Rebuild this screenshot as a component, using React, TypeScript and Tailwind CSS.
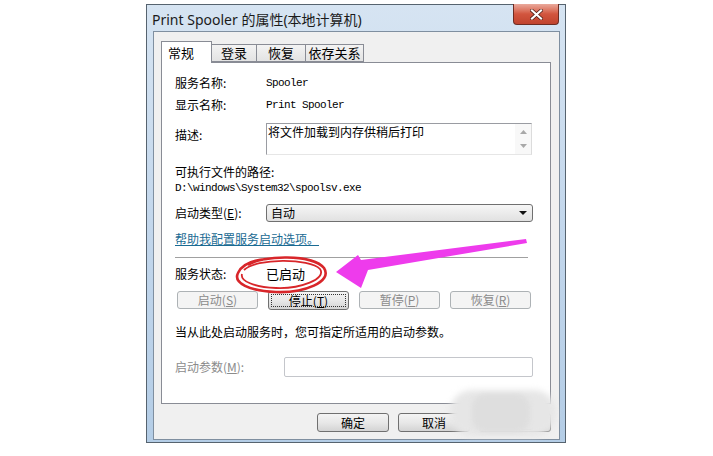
const cjk = { fontFamily: '"Noto Sans CJK SC", "Noto Sans", sans-serif' };
const mono = { fontFamily: '"Liberation Mono", "Noto Sans CJK SC", monospace' };

function Tab({ label, active, w }: { label: string; active?: boolean; w: string }) {
  if (active) {
    return (
      <div className={`${w} relative z-10 -mb-px flex h-[22px] items-start border border-b-0 border-[#898c95] bg-white pl-[6px] pt-[3px] text-[13px] leading-[16px]`}>
        {label}
      </div>
    );
  }
  return (
    <div className={`${w} flex h-[18px] items-center justify-center border border-[#898c95] border-l-0 bg-gradient-to-b from-[#f3f3f3] to-[#e3e3e3] text-[13px] leading-[16px]`}>
      {label}
    </div>
  );
}

function Btn({ children, disabled, focus, w = "w-[81px]" }: { children: React.ReactNode; disabled?: boolean; focus?: boolean; w?: string }) {
  if (disabled) {
    return (
      <div className={`${w} flex h-[18px] items-center justify-center rounded-[3px] border border-[#adb2b5] bg-[#f4f4f4] text-[12px] leading-[14px] text-[#8b8b8b]`}>
        {children}
      </div>
    );
  }
  return (
    <div className={`${w} flex h-[19px] items-center justify-center rounded-[3px] border border-[#707070] bg-gradient-to-b from-[#f4f4f4] via-[#e8e8e8] to-[#d4d4d4] p-[2px] text-[12px] leading-[14px] text-black`}>
      <div className={`flex h-full w-full items-center justify-center ${focus ? "border border-dotted border-[#333]" : ""}`}>{children}</div>
    </div>
  );
}

export default function App() {
  return (
    <div className="relative h-[456px] w-[713px] overflow-hidden bg-white text-black" style={cjk}>
      <div className="ml-[146px] mt-[4px] flex h-[439px] w-[420px] flex-col border border-[#56636f] bg-gradient-to-b from-[#d6e4f2] via-[#c3d7ec] to-[#b4cde6]">
        {/* title bar */}
        <div className="flex h-[26px] items-start">
          <div className="pl-[5px] pt-[7px] text-[14px] leading-[16px] text-[#1b1b1b]" style={{ fontFamily: '"Noto Sans", "Noto Sans CJK SC", sans-serif' }}>
            Print Spooler 的属性(本地计算机)
          </div>
          <div className="-mt-px ml-auto mr-[6px] flex h-[21px] w-[46px] items-center justify-center rounded-b-[4px] border border-t-0 border-[#6e2c22] bg-gradient-to-b from-[#e9a99c] via-[#d2553e] to-[#c0432e]">
            <svg width="13" height="11" viewBox="0 0 13 11">
              <path d="M2 1.5 L11 9.5 M11 1.5 L2 9.5" stroke="#4a1a12" strokeWidth="3.6" strokeLinecap="square" />
              <path d="M2 1.5 L11 9.5 M11 1.5 L2 9.5" stroke="#ffffff" strokeWidth="2.2" strokeLinecap="square" />
            </svg>
          </div>
        </div>

        {/* client area */}
        <div className="ml-[6px] flex h-[409px] w-[407px] flex-col border border-[#7f8fa0] bg-[#f0f0f0] pl-[7px] pr-[8px] pt-[9px]">
          <div className="flex h-[21px] items-end">
            <Tab label="常规" active w="w-[51px]" />
            <Tab label="登录" w="w-[45px]" />
            <Tab label="恢复" w="w-[49px]" />
            <Tab label="依存关系" w="w-[58px]" />
          </div>

          {/* tab page */}
          <div className="flex h-[342px] w-[390px] flex-col border border-[#898c95] bg-white pl-[13px] pr-[17px] pt-[9px] text-[12px] leading-[16px]">
            <div className="flex h-[22px] items-center">
              <div className="w-[91px]">服务名称:</div>
              <div className="text-[11px] tracking-[-0.6px]" style={mono}>Spooler</div>
            </div>
            <div className="flex h-[22px] items-center">
              <div className="w-[91px]">显示名称:</div>
              <div className="text-[11px] tracking-[-0.6px]" style={mono}>Print Spooler</div>
            </div>
            <div className="mt-[7px] flex items-start">
              <div className="mt-[4px] w-[91px]">描述:</div>
              <div className="flex h-[32px] w-[266px] border border-[#9a9ca2] border-r-[#dcdcdc] border-b-[#e6e6e6]">
                <div className="flex-1 pl-[1px] pt-0 text-[12px] leading-[15px]">将文件加载到内存供稍后打印</div>
                <div className="flex w-[16px] flex-col items-center justify-between bg-[#f8f8f8] py-[6px]">
                  <svg width="7" height="4" viewBox="0 0 7 4"><path d="M0 4 L3.5 0 L7 4 Z" fill="#a8a8a8" /></svg>
                  <svg width="7" height="4" viewBox="0 0 7 4"><path d="M0 0 L7 0 L3.5 4 Z" fill="#a8a8a8" /></svg>
                </div>
              </div>
            </div>
            <div className="mt-[9px] flex h-[16px] items-center">可执行文件的路径:</div>
            <div className="flex h-[16px] items-center text-[11px] tracking-[-0.6px]" style={mono}>
              D:\windows\System32\spoolsv.exe
            </div>
            <div className="mt-[8px] flex items-center">
              <div className="w-[91px]">
                启动类型(<span className="underline">E</span>):
              </div>
              <div className="flex h-[18px] w-[267px] items-center rounded-[3px] border border-[#707070] bg-gradient-to-b from-[#f6f6f6] to-[#e1e1e1] pl-[4px] pr-[5px]">
                <span className="flex-1">自动</span>
                <svg width="8" height="4" viewBox="0 0 8 4"><path d="M0 0 L8 0 L4 4 Z" fill="#111" /></svg>
              </div>
            </div>
            <div className="mt-[9px] flex h-[16px] items-center">
              <span className="text-[#1a6b93] underline decoration-[#1a6b93]">帮助我配置服务启动选项。</span>
            </div>
            <div className="mt-[10px] h-px w-[353px] bg-[#a0a0a0]" />
            <div className="mt-[6px] flex h-[20px] items-center">
              <div className="w-[91px]">服务状态:</div>
              <div className="text-[13px]">已启动</div>
            </div>
            <div className="ml-[2px] mt-[7px] flex gap-[10px]">
              <Btn disabled>
                启动(<span className="underline">S</span>)
              </Btn>
              <Btn focus>
                停止(<span className="underline">T</span>)
              </Btn>
              <Btn disabled>
                暂停(<span className="underline">P</span>)
              </Btn>
              <Btn disabled>
                恢复(<span className="underline">R</span>)
              </Btn>
            </div>
            <div className="mt-[14px] flex h-[16px] items-center">当从此处启动服务时，您可指定所适用的启动参数。</div>
            <div className="mt-[17px] flex items-center">
              <div className="w-[109px] text-[#8b8b8b]">
                启动参数(<span className="underline">M</span>):
              </div>
              <div className="h-[20px] w-[249px] rounded-[2px] border border-[#c4c6cb] bg-white" />
            </div>
          </div>

          {/* dialog buttons */}
          <div className="mt-[9px] flex justify-end gap-[9px]">
            <Btn w="w-[72px]">确定</Btn>
            <Btn w="w-[72px]">取消</Btn>
            <Btn w="w-[72px]">
              应用(<span className="underline">A</span>)
            </Btn>
          </div>
        </div>
      </div>

      {/* watermark blob */}
      <div className="absolute left-[450px] top-[390px] h-[46px] w-[106px] rounded-[22px] bg-[#e6e6e6] blur-[3px]" />
      <div className="absolute left-[472px] top-[394px] h-[38px] w-[58px] rounded-[14px] bg-[#dedede] blur-[2px]" />

      {/* annotations */}
      <svg className="pointer-events-none absolute left-0 top-0" width="713" height="456" viewBox="0 0 713 456">
        <path
          d="M248 265 C 262 255, 313 254, 324 268 C 333 282, 304 293, 276 292 C 249 291, 233 283, 238 273 C 242 264, 254 260, 267 259"
          fill="none"
          stroke="#d8262a"
          strokeWidth="2.6"
        />
        <path
          d="M244 270 C 256 258, 310 258, 320 269 C 327 279, 300 289, 276 288 C 254 287, 240 281, 242 274"
          fill="none"
          stroke="#d8262a"
          strokeWidth="1.8"
        />
        <path d="M336 272 L358 255 L361 260 L526 239 L527 243 L368 270 L361 288 Z" fill="#ee3bec" />
      </svg>
    </div>
  );
}
